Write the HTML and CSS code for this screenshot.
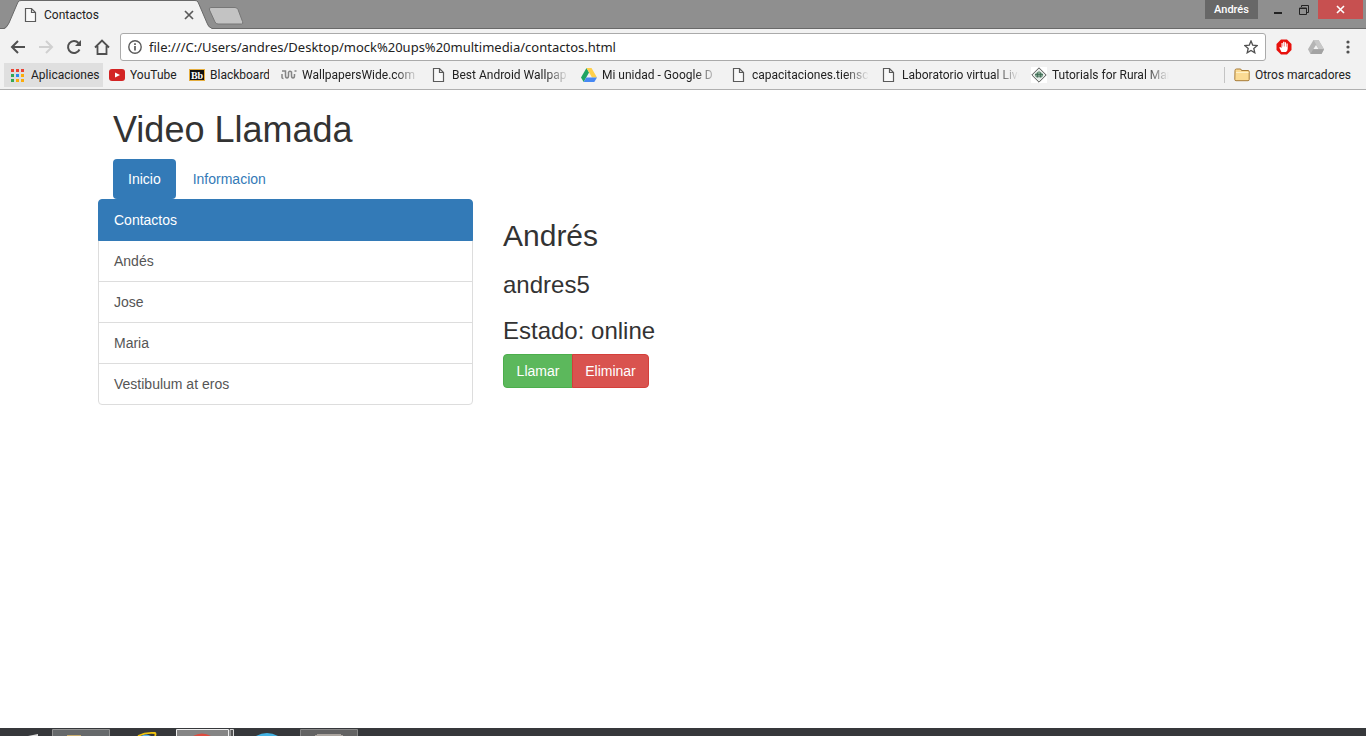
FILE: index.html
```html
<!DOCTYPE html>
<html lang="es">
<head>
<meta charset="utf-8">
<title>Contactos</title>
<link rel="stylesheet" href="styles.css">
</head>
<body>
<svg class="defs" width="0" height="0" aria-hidden="true">
  <symbol id="doc" viewBox="0 0 16 16"><path d="M2.500 1.500h6l4 4v9h-10zM8.500 1.500v4h4" fill="#fff" fill-opacity=".5" stroke="#5a5a5a" stroke-width="1.200"/></symbol>
</svg>
<header class="browser">
  <div class="strip">
    <div class="tab">
      <svg class="tab-shape" width="208" height="29" viewBox="0 0 208 29" aria-hidden="true"><path d="M0 29L2 28Q4 26 5 23L14 2Q15 .5 17 .5H191Q193 .5 194 2L203 23Q204 27 208 28.500V29z" fill="#f2f2f2"/><path d="M0 28.500Q3 27 5 23L14 2Q15 .5 17 .5H191Q193 .5 194 2L203 23Q204 27 208 28.500" fill="none" stroke="#696969"/></svg>
      <svg class="icon" aria-hidden="true"><use href="#doc"/></svg>
      <span class="tab-title">Contactos</span>
      <button class="plain" aria-label="Cerrar pestaña"><svg width="10" height="10" viewBox="0 0 10 10"><path d="M1 1l8 8M9 1l-8 8" stroke="#5a5a5a" stroke-width="1.700"/></svg></button>
    </div>
    <button class="plain new-tab" aria-label="Nueva pestaña"><svg width="36" height="18" viewBox="0 0 36 18"><path d="M3 .5h24q2 0 3 2l4.500 12q1 2.500-1 2.500H10q-2 0-3-2L1.500 3Q.5.500 3 .5z" fill="#c3c3c3" stroke="#777"/></svg></button>
    <div class="window-controls">
      <button class="user">Andrés</button>
      <button class="plain win" aria-label="Minimizar"><svg width="9" height="12" viewBox="0 0 9 12"><path d="M0 9h8" stroke="#222" stroke-width="2"/></svg></button>
      <button class="plain win" aria-label="Restaurar"><svg width="10" height="10" viewBox="0 0 10 10"><path d="M.5 3h7v6.500h-7zM.5 3.500h7M2.500 2V.5h7v7H8" fill="none" stroke="#222"/></svg></button>
      <button class="plain close" aria-label="Cerrar"><svg width="9" height="9" viewBox="0 0 9 9"><path d="M1 1l7 7M8 1l-7 7" stroke="#fff" stroke-width="1.600"/></svg></button>
    </div>
  </div>
  <div class="toolbar">
    <div class="tools">
      <button class="plain" aria-label="Atrás"><svg width="16" height="16" viewBox="0 0 16 16"><path d="M15 8H2M8 2L2 8l6 6" fill="none" stroke="#505050" stroke-width="2"/></svg></button>
      <button class="plain" aria-label="Adelante"><svg width="16" height="16" viewBox="0 0 16 16"><path d="M1 8h13M8 2l6 6-6 6" fill="none" stroke="#d0d0d0" stroke-width="2"/></svg></button>
      <button class="plain" aria-label="Recargar"><svg width="16" height="16" viewBox="0 0 16 16"><path d="M13.500 10.500A6 6 0 1 1 12.500 4" fill="none" stroke="#505050" stroke-width="2"/><path d="M15 1v6H9z" fill="#505050"/></svg></button>
      <button class="plain" aria-label="Inicio"><svg width="16" height="16" viewBox="0 0 16 16"><path d="M1 8.500L8 1.500l7 7M3.500 7v8h9V7" fill="none" stroke="#505050" stroke-width="1.800"/></svg></button>
    </div>
    <div class="address">
      <svg width="14" height="14" viewBox="0 0 14 14" aria-hidden="true"><circle cx="7" cy="7" r="6.200" fill="none" stroke="#5a5a5a" stroke-width="1.400"/><path d="M7 6v4.500M7 3.200v1.700" stroke="#5a5a5a" stroke-width="1.700"/></svg>
      <input class="url" type="text" aria-label="Dirección" value="file:///C:/Users/andres/Desktop/mock%20ups%20multimedia/contactos.html">
      <button class="plain" aria-label="Añadir a marcadores"><svg width="14" height="14" viewBox="0 0 14 14"><path d="M7 1l1.700 4.100 4.500.4-3.400 2.900 1 4.400L7 10.500l-3.800 2.300 1-4.400L.8 5.500l4.500-.4z" fill="none" stroke="#505050" stroke-width="1.300"/></svg></button>
    </div>
    <div class="tools extensions">
      <button class="plain" aria-label="Bloqueador"><svg width="16" height="16" viewBox="0 0 16 16"><path d="M5 .5h6L15.500 5v6L11 15.500H5L.5 11V5z" fill="#e8110c"/><path d="M5.500 13L3.200 8.500l1-.6L5.500 9V4h1.200v3.500h.4V2.800h1.300v4.700h.4V3.300H10v4.400h.4V4.500h1.300v5.300Q11.500 12 10 13z" fill="#fff"/></svg></button>
      <button class="plain" aria-label="Google Drive"><svg width="16" height="14" viewBox="0 0 16 14"><path d="M5.500 0h5L16 9.200 13.500 14h-11L0 9.200z" fill="#b5b5b5"/><path d="M5.500 0h5L16 9.200h-5z" fill="#c8c8c8"/><path d="M5.300 9.200L8 5l2.700 4.200z" fill="#f2f2f2"/><path d="M5.300 9.200H16L13.500 14h-11z" fill="#a3a3a3"/></svg></button>
      <button class="plain" aria-label="Menú"><svg width="16" height="14" viewBox="0 0 16 14"><g fill="#505050"><circle cx="8" cy="2" r="1.600"/><circle cx="8" cy="7" r="1.600"/><circle cx="8" cy="12" r="1.600"/></g></svg></button>
    </div>
  </div>
  <nav class="bookmarks" aria-label="Marcadores">
    <a class="mark apps" href="#"><svg class="icon" viewBox="0 0 16 16"><path d="M2 2h3v3H2zM7 2h3v3H7zM12 2h3v3h-3z" fill="#ea4335"/><path d="M2 7h3v3H2zM2 12h3v3H2z" fill="#34a853"/><path d="M7 7h3v3H7z" fill="#2b8cf0"/><path d="M12 7h3v3h-3zM7 12h3v3H7zM12 12h3v3h-3z" fill="#fbac09"/></svg><span class="label">Aplicaciones</span></a>
    <a class="mark yt" href="#"><svg class="icon" viewBox="0 0 16 16"><rect y="2" width="16" height="12" rx="3" fill="#d32424"/><path d="M6 5.500l5 2.500-5 2.500z" fill="#fff"/></svg><span class="label">YouTube</span></a>
    <a class="mark bb" href="#"><svg class="icon" viewBox="0 0 16 16"><rect x=".5" y="2.500" width="15" height="11" fill="#111" stroke="#e5ad3c"/><text x="8" y="11.500" text-anchor="middle" class="bb-text">Bb</text></svg><span class="label">Blackboard</span></a>
    <a class="mark ww" href="#"><svg class="icon" viewBox="0 0 16 16"><path d="M1 4h3.500v4.500q0 2.500 1.500 2.500t1.500-2.500V5M7.500 5q1.500-1.500 3 0v3.500q0 2.500 1.500 2.500t1.500-2.500V7M13.500 4h2M1 7v3.500q0 1 1.500 1" fill="none" stroke="#858585" stroke-width="1.500"/></svg><span class="label fade">WallpapersWide.com</span></a>
    <a class="mark wide" href="#"><svg class="icon"><use href="#doc"/></svg><span class="label fade">Best Android Wallpap</span></a>
    <a class="mark wide" href="#"><svg class="icon" viewBox="0 0 16 16"><path d="M5.500 1L0 10.500 2.700 15 8 5.500z" fill="#1fa463"/><path d="M5.500 1h5L16 10.500h-5z" fill="#ffd04b"/><path d="M5.300 10.500H16L13.300 15H2.700z" fill="#4688f4"/></svg><span class="label fade">Mi unidad - Google D</span></a>
    <a class="mark wide" href="#"><svg class="icon"><use href="#doc"/></svg><span class="label fade">capacitaciones.tiensco</span></a>
    <a class="mark wide" href="#"><svg class="icon"><use href="#doc"/></svg><span class="label fade">Laboratorio virtual Live</span></a>
    <a class="mark wide" href="#"><svg class="icon" viewBox="0 0 16 16"><path fill="#fff" d="M0 0h16v16H0z"/><path d="M8 .8L15.200 8 8 15.200.8 8z" fill="#e6ece8" stroke="#555"/><path d="M8 4l4 3v2.500H4V7z" fill="#7ca18b"/><path d="M4 7.500h8M5 9.800h6M6.500 5.500v5M9.500 5.500v5" stroke="#3f6a54" stroke-width=".8"/></svg><span class="label fade">Tutorials for Rural Mar</span></a>
    <a class="mark others" href="#"><svg class="icon" viewBox="0 0 16 16"><path d="M1 3.500q0-1.500 1.500-1.500H6q1.500 0 1.500 1.500H14q1.200 0 1.200 1.200V12.500q0 1.200-1.200 1.200H2q-1.200 0-1.200-1.200z" fill="#fbdb94" stroke="#a77b38"/><path d="M2 5.500h12.500" stroke="#fff1c8"/></svg><span class="label">Otros marcadores</span></a>
  </nav>
</header>
<main class="page">
  <div class="container">
    <h1>Video Llamada</h1>
    <nav class="pills">
      <a class="pill active" href="#">Inicio</a>
      <a class="pill" href="#">Informacion</a>
    </nav>
    <div class="row">
      <div class="contacts">
        <a class="contact active" href="#">Contactos</a>
        <a class="contact" href="#">Andés</a>
        <a class="contact" href="#">Jose</a>
        <a class="contact" href="#">Maria</a>
        <a class="contact" href="#">Vestibulum at eros</a>
      </div>
      <section class="detail">
        <h2>Andrés</h2>
        <h3>andres5</h3>
        <h3>Estado: online</h3>
        <div class="actions">
          <button class="btn call">Llamar</button><button class="btn remove">Eliminar</button>
        </div>
      </section>
    </div>
  </div>
</main>
<footer class="taskbar">
  <svg width="380" height="8" viewBox="0 0 380 8" aria-hidden="true">
    <path d="M28 8l10-2v2z" fill="#ddd"/>
    <path d="M52.500 8V1.500h57V8" fill="#66696b" stroke="#929292"/><path d="M67 8V7h14v1z" fill="#c9ad6d"/>
    <path d="M138 8q8-4 17-3 1 1 0 3" fill="none" stroke="#f1c40f" stroke-width="1.800"/><path d="M141 8q5-3 10 0z" fill="#5db4e8"/>
    <path d="M176.500 8V1.500h52V8" fill="#858585" stroke="#eee"/><path d="M230 8V1.500h3.500V8" fill="#555" stroke="#d7d7d7"/><path d="M193 8q9-5 18 0z" fill="#dd4b3e"/>
    <path d="M256 8q11-6 22 0z" fill="#43b4e5"/>
    <path d="M300.500 8V1.500h57V8" fill="#636363" stroke="#878787"/><path d="M315 8v-1h2v-1h24v1h2v1z" fill="#aaa49e"/>
  </svg>
</footer>
</body>
</html>
```
FILE: styles.css
```css
* { box-sizing: border-box; }
body {
  margin: 0;
  min-height: 100vh;
  display: flex;
  flex-direction: column;
  background: #fff;
  color: #333;
  font: 14px/20px "Liberation Sans", Arial, sans-serif;
}
a { text-decoration: none; }
.defs { position: absolute; }
svg { display: block; flex: none; }
.icon { width: 16px; height: 16px; }
.plain {
  display: flex;
  align-items: center;
  justify-content: center;
  padding: 0;
  border: 0;
  background: none;
}

/* Browser window */
.browser {
  border-bottom: 1px solid #b0b0b0;
  background: #f2f2f2;
  color: #222;
  font: 12px/16px Roboto, "Open Sans", sans-serif;
}
.strip {
  display: flex;
  height: 29px;
  padding-left: 4px;
  background: #8f8f8f;
  border-bottom: 1px solid #696969;
}
.tab {
  position: relative;
  display: flex;
  align-items: center;
  gap: 2px;
  width: 204px;
  height: 29px;
  padding: 1px 14px 0 19px;
}
.tab .icon { margin-right: 3px; }
.tab-shape { position: absolute; left: 0; top: 0; }
.tab .icon, .tab-title, .tab .plain { position: relative; }
.tab-title { flex: 1; }
.new-tab { align-self: flex-start; margin-top: 7px; }
.window-controls {
  display: flex;
  align-items: stretch;
  height: 19px;
  margin-left: auto;
  margin-right: 3px;
}
.user {
  width: 53px;
  padding: 0;
  border: 0;
  background: #676767;
  color: #fff;
  font: 500 11px/18px Roboto, "Open Sans", sans-serif;
}
.win { width: 26px; }
.user + .win { margin-left: 7px; }
.close { width: 45px; margin-left: 1px; background: #c75050; }
.toolbar {
  display: flex;
  align-items: center;
  gap: 10px;
  padding: 4px 10px 1px;
}
.tools { display: flex; gap: 12px; }
.extensions { gap: 16px; }
.address {
  flex: 1;
  display: flex;
  align-items: center;
  gap: 7px;
  height: 28px;
  padding: 0 7px;
  border: 1px solid #aaa;
  border-radius: 3px;
  background: #fff;
}
.url {
  flex: 1;
  min-width: 0;
  padding: 0;
  border: 0;
  outline: 0;
  background: none;
  color: #222;
  font: 13px/20px "Noto Sans", "Open Sans", sans-serif;
}
.bookmarks {
  display: flex;
  height: 27px;
  padding: 1px 9px 2px 4px;
}
.mark {
  display: flex;
  align-items: center;
  gap: 5px;
  padding: 0 6px;
  color: #222;
  white-space: nowrap;
}
.mark .label { flex: 1; min-width: 0; overflow: hidden; }
.label.fade {
  -webkit-mask-image: linear-gradient(to left, transparent, #000 24px);
  mask-image: linear-gradient(to left, transparent, #000 24px);
}
.apps { width: 99px; padding: 0 2px 0 5px; gap: 6px; background: #dfdfdf; }
.yt { width: 80px; padding-right: 0; }
.bb { width: 92px; }
.ww { width: 150px; }
.wide { width: 150px; }
.others { position: relative; margin-left: auto; padding-left: 10px; }
.others::before {
  content: "";
  position: absolute;
  left: 0;
  top: 4px;
  bottom: 4px;
  border-left: 1px solid #c4c4c4;
}
.bb-text { font: bold 10px "Liberation Serif", serif; fill: #fff; }

/* Page */
.page { flex: 1; }
.container { max-width: 1170px; margin: 0 auto; padding: 0 15px; }
h1, h2, h3 { margin: 20px 0 0; font-weight: normal; }
h1 { margin: 0; padding: 20px 0 10px; font-size: 36px; line-height: 39px; }
h2 { font-size: 30px; line-height: 33px; }
h3 { font-size: 24px; line-height: 26px; }
.pills { display: flex; gap: 2px; }
.pill { padding: 10px 15px; border-radius: 4px; color: #337ab7; }
.pill.active { background: #337ab7; color: #fff; }
.row {
  display: grid;
  grid-template-columns: 1fr 2fr;
  margin: 0 -15px;
}
.contacts { padding-right: 15px; }
.contact {
  display: block;
  margin-bottom: -1px;
  padding: 10px 15px;
  border: 1px solid #ddd;
  color: #555;
}
.contact:first-child { border-radius: 4px 4px 0 0; }
.contact:last-child { margin-bottom: 0; border-radius: 0 0 4px 4px; }
.contact.active {
  position: relative;
  border-color: #337ab7;
  background: #337ab7;
  color: #fff;
}
.detail { padding: 0 15px; }
.actions { display: flex; margin-top: 10px; }
.btn {
  padding: 6px 12px;
  border: 1px solid;
  color: #fff;
  font: 14px/20px "Liberation Sans", Arial, sans-serif;
}
.call { width: 70px; border-color: #4cae4c; border-radius: 4px 0 0 4px; background: #5cb85c; }
.remove {
  width: 77px;
  margin-left: -1px;
  border-color: #d43f3a;
  border-radius: 0 4px 4px 0;
  background: #d9534f;
}

/* Taskbar */
.taskbar { background: #36383b; overflow: hidden; }
```
